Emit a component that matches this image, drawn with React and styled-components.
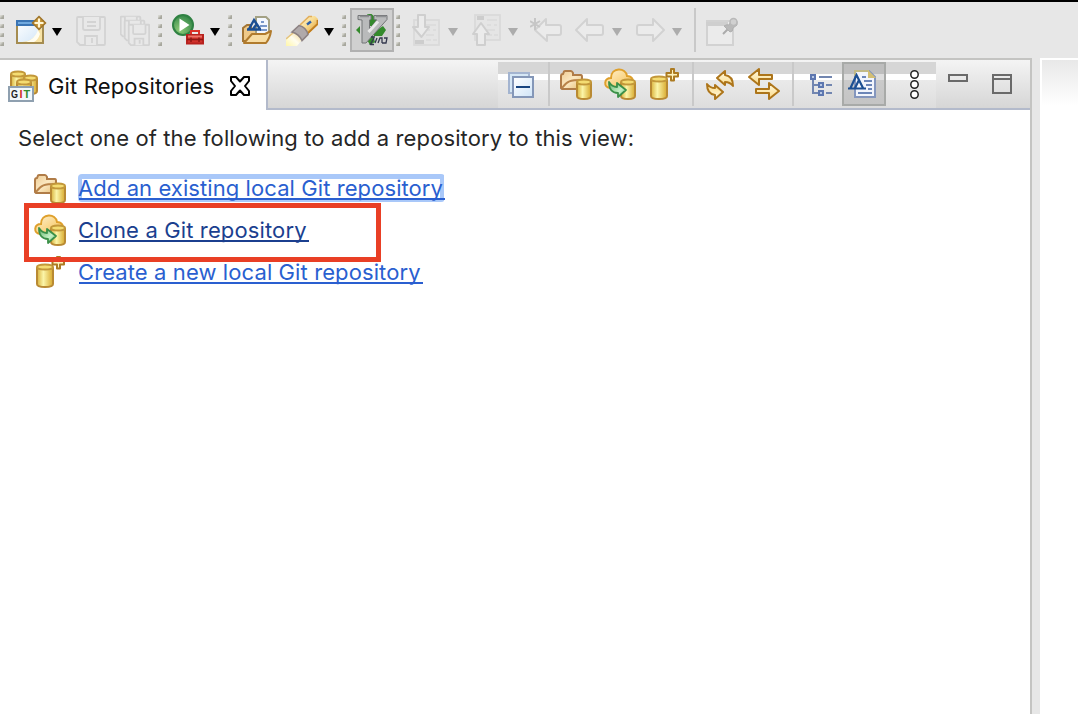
import React from "react";
import styled, { createGlobalStyle } from "styled-components";

const GlobalStyle = createGlobalStyle`
  * { box-sizing: border-box; }
  html, body { margin: 0; padding: 0; }
  body { background: #e7e7e7; font-family: Inter, "Liberation Sans", sans-serif; font-size: 22px; overflow: hidden; }
`;

const Window = styled.div`
  display: flex;
  flex-direction: column;
  width: 1078px;
  height: 714px;
  border-top: 2px solid #000;
  background: #e7e7e7;
`;
const MainToolbar = styled.div`
  display: flex;
  align-items: center;
  height: 56px;
  flex: none;
`;
const Svg = styled.svg`
  display: block;
  flex: none;
  margin-left: ${(p) => p.$gap || 0}px;
`;
const Handle = styled.div`
  display: flex;
  flex-direction: column;
  gap: 5px;
  flex: none;
  margin-left: ${(p) => p.$gap || 0}px;
`;
const Grip = styled.i`
  width: 4px;
  height: 4px;
  background: linear-gradient(135deg, #d8d8d2 20%, #a9a99f 60%, #a5a59c);
`;
const Caret = styled.span`
  flex: none;
  width: 0;
  height: 0;
  margin: 4px 0 0 ${(p) => p.$gap}px;
  border: 5px solid transparent;
  border-top: 8px solid ${(p) => (p.$off ? "#acacac" : "#000")};
  border-bottom: 0;
`;
const Toggle = styled.button`
  display: flex;
  align-items: center;
  justify-content: center;
  flex: none;
  width: 44px;
  height: 44px;
  padding: 0;
  margin-left: ${(p) => p.$gap}px;
  border: 2px solid ${(p) => p.$edge || "#b1b1b1"};
  background: ${(p) => p.$fill || "#d0d0d0"};
`;
const Divider = styled.div`
  flex: none;
  width: 2px;
  height: 44px;
  margin-left: ${(p) => p.$gap}px;
  background: #c9c9c9;
`;
const Workbench = styled.div`
  display: flex;
  flex: 1;
  gap: 8px;
`;
const View = styled.section`
  display: flex;
  flex-direction: column;
  width: 1032px;
  border: solid #c4c4c2;
  border-width: 2px 2px 0 0;
  background: #fff;
`;
const EditorArea = styled.div`
  flex: 1;
  border: solid #fff;
  border-width: 2px 0 0 2px;
  background: linear-gradient(#e8e8e8, #fff 46px);
`;
const TabStrip = styled.header`
  display: flex;
  height: 50px;
  flex: none;
  border-bottom: 2px solid #b3bacb;
  background: linear-gradient(#f4f4f4, #d6d6d6);
`;
const Tab = styled.div`
  display: flex;
  align-items: center;
  width: 268px;
  height: 50px;
  flex: none;
  padding: 2px 0 0 8px;
  border-right: 2px solid #b3bacb;
  background: #fff;
`;
const TabTitle = styled.span`
  width: 182px;
  margin-left: 10px;
  color: #111;
  white-space: nowrap;
  line-height: 28px;
  letter-spacing: 0.15px;
`;
const ViewToolbar = styled.div`
  display: flex;
  align-items: center;
  width: 438px;
  height: 46px;
  margin: 2px 0 0 230px;
  padding-bottom: 2px;
  background: linear-gradient(#d6d6d6 12px, #fff 12px, #fff 18px, #eaeaea 18px, #dddddd);
`;
const ViewControls = styled.div`
  display: flex;
  margin: 14px 0 0 12px;
  gap: 24px;
`;
const MinimizeButton = styled.div`
  width: 20px;
  height: 8px;
  border: 2px solid #6a6a6a;
`;
const MaximizeButton = styled.div`
  width: 20px;
  height: 20px;
  border: 2px solid #6a6a6a;
  background: linear-gradient(transparent 2px, #6a6a6a 2px, #6a6a6a 4px, transparent 4px);
`;
const Content = styled.main`
  display: flex;
  flex-direction: column;
  align-items: flex-start;
`;
const Prompt = styled.p`
  margin: 14px 0 15px 18px;
  line-height: 28px;
  white-space: nowrap;
  color: #262626;
  letter-spacing: 0.11px;
`;
const Option = styled.div`
  position: relative;
  display: flex;
  align-items: center;
  height: 42px;
  margin-left: 34px;
  gap: 12px;
`;
const OptionLink = styled.a`
  position: relative;
  height: 28px;
  width: ${(p) => p.$w}px;
  line-height: 28px;
  white-space: nowrap;
  color: ${(p) => (p.$active ? "#1b3f8f" : "#2a5fd0")};
  letter-spacing: ${(p) => p.$track}px;
  border-radius: 4px;
  background: ${(p) =>
    p.$focused
      ? "linear-gradient(#fff, #fff) 4px 5px / 358px 19px no-repeat, linear-gradient(90deg, #a9c8f9 366px, transparent 366px)"
      : "none"};
  &::after {
    content: "";
    position: absolute;
    left: 1px;
    right: 0;
    bottom: 2px;
    height: 2px;
    background: currentColor;
  }
`;
const Highlight = styled.div`
  position: absolute;
  z-index: 2;
  left: -10px;
  top: -6px;
  width: 357px;
  height: 59px;
  border: 5px solid #e93f25;
`;

function Icon({ box, gap, children }) {
  const [x, y, w, h] = box;
  return (
    <Svg width={w} height={h} viewBox={`${x} ${y} ${w} ${h}`} $gap={gap} fill="none">
      {children}
    </Svg>
  );
}

const Gradients = () => (
  <svg width="0" height="0" display="block">
    <defs>
      <linearGradient id="gold" x1="0" x2="1" y1="0" y2="0">
        <stop offset="0" stopColor="#d9b23c" />
        <stop offset=".4" stopColor="#fbf5a8" />
        <stop offset="1" stopColor="#d8a92e" />
      </linearGradient>
      <linearGradient id="tan" x1="0" x2="1" y1="0" y2="1">
        <stop offset="0" stopColor="#eecb93" />
        <stop offset=".5" stopColor="#fbe8c2" />
        <stop offset="1" stopColor="#e6bd74" />
      </linearGradient>
      <linearGradient id="arrow" x1="0" x2="0" y1="0" y2="1">
        <stop offset="0" stopColor="#fffbe6" />
        <stop offset="1" stopColor="#fbd983" />
      </linearGradient>
      <linearGradient id="cloud" x1="0" x2="1" y1="0" y2="1">
        <stop offset="0" stopColor="#fff3d2" />
        <stop offset="1" stopColor="#f5bd4c" />
      </linearGradient>
      <linearGradient id="leaf" x1="0" x2="1" y1="0" y2="1">
        <stop offset="0" stopColor="#63b26c" />
        <stop offset=".6" stopColor="#c6f0c6" />
        <stop offset="1" stopColor="#70c67c" />
      </linearGradient>
      <linearGradient id="sheet" x1="0" x2="1" y1="0" y2="1">
        <stop offset="0" stopColor="#ffffff" />
        <stop offset="1" stopColor="#cfe4f7" />
      </linearGradient>
      <radialGradient id="run" cx=".35" cy=".75" r=".75">
        <stop offset="0" stopColor="#8fcb78" />
        <stop offset="1" stopColor="#37894a" />
      </radialGradient>
      <linearGradient id="torch" x1="0" x2="1" y1="0" y2="1">
        <stop offset="0" stopColor="#fff3cf" />
        <stop offset=".45" stopColor="#f8dc94" />
        <stop offset="1" stopColor="#dd9420" />
      </linearGradient>
      <linearGradient id="beam" x1="0" x2="1" y1="1" y2="0">
        <stop offset="0" stopColor="#fff6a8" />
        <stop offset=".5" stopColor="#fffdf0" />
        <stop offset="1" stopColor="#f3d68c" />
      </linearGradient>
    </defs>
  </svg>
);

const Cylinder = ({ x, y, w, h }) => {
  const r = w / 2;
  return (
    <g stroke="#b98a33" strokeWidth="2">
      <path d={`M${x} ${y + 3}V${y + h - 3}C${x} ${y + h + 1} ${x + w} ${y + h + 1} ${x + w} ${y + h - 3}V${y + 3}`} fill="url(#gold)" />
      <ellipse cx={x + r} cy={y + 3} rx={r} ry="2.600" fill="#f4dc72" stroke="#c3983a" />
    </g>
  );
};
const AddRepoIcon = ({ gap }) => (
  <Icon box={[0, 0, 32, 32]} gap={gap}>
    <path d="M1 20V8Q1 6 3 6L4 3.500Q4 3 5 3H11Q12 3 13 5V7H21Q22 7 22 9V21H2Z" fill="url(#tan)" stroke="#b07c48" strokeWidth="2" />
    <path d="M2 20C7 13 10 12 22 12" stroke="#b98349" strokeWidth="2" />
    <Cylinder x={17} y={11} w={14} h={20} />
  </Icon>
);
const CloneRepoIcon = ({ gap }) => (
  <Icon box={[0, 0, 32, 32]} gap={gap}>
    <path d="M6 20C-1 19 0 10 7 10C7 -1 22 -1 23 8C28 8 30 12 29 16L20 20Z" fill="url(#cloud)" stroke="#dfa02c" strokeWidth="2" />
    <Cylinder x={17} y={11} w={14} h={20} />
    <path d="M5 14Q8 19 13 19V15L22 22L14 29V25Q5 25 5 14Z" fill="url(#leaf)" stroke="#3b9048" strokeWidth="1.800" strokeLinejoin="round" />
  </Icon>
);
const CreateRepoIcon = ({ gap }) => (
  <Icon box={[0, 0, 32, 32]} gap={gap}>
    <Cylinder x={3} y={8} w={16} h={23} />
    <path d="M23 1H26V5H30V8.500H26V12.500H23V8.500H18.500V5H23Z" fill="#fdf2bd" stroke="#ac7b22" strokeWidth="2" strokeLinejoin="round" />
  </Icon>
);
const Floppy = ({ x, y, s = 1 }) => (
  <g transform={`translate(${x} ${y}) scale(${s})`} stroke="#d3d3d3" strokeWidth={1.8 / s} fill="#e8e8e8">
    <path d="M2 1H28Q29 1 29 2V28Q29 29 28 29H4L1 26V2Q1 1 2 1Z" />
    <path d="M7 1V12Q7 14 9 14H22Q24 14 24 12V1M9 29V20H21V29M16 22V27" />
    {s === 1 && <path d="M11 6H20M11 10H20" />}
  </g>
);
const AnnotationPage = ({ x, y }) => (
  <g>
    <rect x={x} y={y} width="25" height="25" fill="#e5e5e5" stroke="#dadada" strokeWidth="1.800" />
    <path d={`M${x + 12} ${y + 5}h10M${x + 12} ${y + 10}h4m3 0h3M${x + 12} ${y + 15}h8M${x + 12} ${y + 20}h5m2 0h4`} stroke="#dadada" strokeWidth="1.600" />
  </g>
);
const DragHandle = ({ gap }) => (
  <Handle $gap={gap}>
    <Grip /><Grip /><Grip /><Grip />
  </Handle>
);

function Toolbar() {
  return (
    <MainToolbar>
      <DragHandle />
      <Icon box={[16, 14, 32, 32]} gap={12}>
        <rect x="17" y="21" width="26" height="22" fill="url(#sheet)" stroke="#a58c50" strokeWidth="2" />
        <path d="M22 42Q36 41 39 28L42 29V42Z" fill="#f8e3a5" />
        <path d="M26 42Q35 39 38 30L40 34Q38 40 34 42Z" fill="#fffdf0" />
        <path d="M16 20H37V26H16Z" fill="#3a74b4" />
        <path d="M18 23H36" stroke="#70a9df" strokeWidth="2" />
        <path d="M39 16.500L45.500 23L39 29.500L32.500 23Z" fill="#c39234" stroke="#a0752a" strokeWidth="1.500" />
        <path d="M39 18.500V27.500M34.500 23H43.500" stroke="#fff6d5" strokeWidth="2.200" />
      </Icon>
      <Caret $gap={4} />
      <Icon box={[76, 14, 30, 32]} gap={14}><Floppy x={76} y={16} /></Icon>
      <Icon box={[120, 14, 30, 32]} gap={14}>
        <Floppy x={120} y={16} s={0.7} />
        <Floppy x={124} y={20} s={0.7} />
        <Floppy x={128} y={24} s={0.73} />
      </Icon>
      <DragHandle gap={8} />
      <Icon box={[172, 14, 32, 32]} gap={10}>
        <circle cx="183" cy="25" r="10" fill="url(#run)" stroke="#2f8142" strokeWidth="2" />
        <path d="M179.500 18.500L189.500 25L179.500 31.500Z" fill="#fff" />
        <path d="M191 35V31H199V35" stroke="#d93027" strokeWidth="2" />
        <rect x="187" y="35" width="16" height="8.500" fill="#d2322c" stroke="#b7221e" strokeWidth="2" />
        <path d="M188 36.500H202" stroke="#ed7166" strokeWidth="2" />
        <path d="M187 39.500H203M191 37.500V42M199 37.500V42" stroke="#8e1713" strokeWidth="1.500" />
      </Icon>
      <Caret $gap={6} />
      <DragHandle gap={8} />
      <Icon box={[242, 14, 32, 32]} gap={10}>
        <path d="M243 41V28L247 25H251V29H263V41Z" fill="#efc988" stroke="#a47635" strokeWidth="2" />
        <path d="M258 17H266L269 20V34H256V17Z" fill="#f4f8ff" stroke="#a3a184" strokeWidth="2" />
        <path d="M261 22H264M260 26H267M260 30H267" stroke="#7a98ca" strokeWidth="2" />
        <path d="M247 29.500H261M249 29L254 20L260 29M253 29L256 25" stroke="#1c4f93" strokeWidth="2.400" />
        <path d="M244 43L252 34H265L271 31Q270 38 266 43Z" fill="#f8dda4" stroke="#b17b2d" strokeWidth="2" strokeLinejoin="round" />
      </Icon>
      <Icon box={[286, 14, 32, 32]} gap={12}>
        <path d="M286 39L294 32Q300 34 301 41L297 46H286Z" fill="url(#beam)" />
        <path d="M286 39L293 33" stroke="#e5c37e" strokeWidth="1.600" />
        <path d="M300 24L309 16H315L318 19V25L308 34Z" fill="url(#torch)" />
        <path d="M300 25L309 16.500H312" stroke="#e1ae5c" strokeWidth="1.600" />
        <path d="M317.500 20V24L307 34" stroke="#c17e20" strokeWidth="1.800" />
        <path d="M307 24.500L311 21.500" stroke="#2f61a8" strokeWidth="2.400" />
        <path d="M292 32L299 25.500Q306 27 308 34.500L302 40.500Q299 34 292 32Z" fill="#b0a9aa" stroke="#8c8182" strokeWidth="1.600" />
      </Icon>
      <Caret $gap={6} />
      <DragHandle gap={8} />
      <Toggle $gap={4} aria-label="Vrapper">
        <Icon box={[356, 14, 32, 32]}>
          <path d="M367 14.500L371 13.500L377 19L373 26H368ZM356 30L360 26V34ZM374 32L383 26L386 30L382 36H374ZM366 38L373 35L375 42L370 45Z" fill="#348a2c" />
          <path d="M358 15.500H371V19.500L369.500 20V29L377 20L374 19.500V15.500H387V19.500L366 43H362V20L358 19.500Z" fill="#b9babb" stroke="#747678" strokeWidth="1" />
          <path d="M360 16.500H369M376 16.500H386" stroke="#8e9092" strokeWidth="1.500" />
          <path d="M368.500 32L378 21.500" stroke="#e9e9e9" strokeWidth="3" />
          <path d="M374 38L370 45M371 37H375M377 38L375 43M378 43L380 38H382V43M384 38H387L386 43H382M370 44.500H374" stroke="#34384e" strokeWidth="1.300" />
        </Icon>
      </Toggle>
      <DragHandle gap={2} />
      <Icon box={[412, 14, 30, 32]} gap={12}>
        <AnnotationPage x={414} y={20} />
        <path d="M415 40H424V44H415Z" fill="#cdcdcd" />
        <path d="M418 15H425V27H429L421.500 37L413 27H418Z" fill="#ebebeb" stroke="#cfcfcf" strokeWidth="2" strokeLinejoin="round" />
      </Icon>
      <Caret $off $gap={6} />
      <Icon box={[472, 14, 30, 32]} gap={14}>
        <AnnotationPage x={475} y={15} />
        <path d="M477 16H484V20H477Z" fill="#cdcdcd" />
        <path d="M477 45V34H473L481 23L489 34H485V45Z" fill="#ebebeb" stroke="#cfcfcf" strokeWidth="2" strokeLinejoin="round" />
      </Icon>
      <Caret $off $gap={6} />
      <Icon box={[530, 14, 32, 32]} gap={12}>
        <path d="M535 30L546 19V25H559Q561 25 561 27V33Q561 35 559 35H547V41Z" fill="#ebebeb" stroke="#d2d2d2" strokeWidth="2" strokeLinejoin="round" />
        <path d="M535 18V30M530 21L540 27M530 27L540 21" stroke="#c6c6c6" strokeWidth="2" />
      </Icon>
      <Icon box={[574, 14, 32, 32]} gap={12}>
        <path d="M576 30L587 19V25H601Q603 25 603 27V33Q603 35 601 35H587V41Z" fill="#ebebeb" stroke="#d2d2d2" strokeWidth="2" strokeLinejoin="round" />
      </Icon>
      <Caret $off $gap={6} />
      <Icon box={[634, 14, 32, 32]} gap={12}>
        <path d="M664 30L653 19V25H639Q637 25 637 27V33Q637 35 639 35H653V41Z" fill="#ebebeb" stroke="#d2d2d2" strokeWidth="2" strokeLinejoin="round" />
      </Icon>
      <Caret $off $gap={6} />
      <Divider $gap={12} />
      <Icon box={[706, 14, 32, 32]} gap={10}>
        <path d="M707 21H733V45H707Z" fill="#ebebeb" stroke="#d2d2d2" strokeWidth="2" />
        <path d="M706 22H728V26H706Z" fill="#cfcfcf" />
        <path d="M723 34L728 29" stroke="#ababab" strokeWidth="2" />
        <path d="M724 26Q727 24 729 25L732 19Q738 18 737 25L733 28Q733 32 730 32Z" fill="#b9b9b9" stroke="#b0b0b0" strokeWidth="1" />
        <circle cx="733.500" cy="22" r="3.500" fill="#d0d0d0" stroke="#b9b9b9" strokeWidth="1.500" />
      </Icon>
    </MainToolbar>
  );
}

function GitTab() {
  return (
    <Tab>
      <Icon box={[8, 69, 30, 34]}>
        <Cylinder x={11} y={71} w={14} h={18} />
        <Cylinder x={24} y={75} w={13} h={19} />
        <Cylinder x={17} y={79} w={14} h={18} />
        <rect x="9" y="87" width="24" height="14" fill="#f2f8fb" stroke="#8fa0b0" strokeWidth="2" />
        <text x="11" y="98" fontFamily="Liberation Sans" fontWeight="700" fontSize="11" textLength="7" lengthAdjust="spacingAndGlyphs" fill="#222">G</text>
        <text x="19.500" y="98" fontFamily="Liberation Sans" fontWeight="700" fontSize="11" fill="#d22d26">I</text>
        <text x="23.500" y="98" fontFamily="Liberation Sans" fontWeight="700" fontSize="11" fill="#338a30">T</text>
      </Icon>
      <TabTitle>Git Repositories</TabTitle>
      <Icon box={[230, 76, 20, 20]}>
        <path d="M231 77H236L240 81.500L244 77H249V81L245 86L249 91V95H244L240 90.500L236 95H231V91L235 86L231 81Z" stroke="#000" strokeWidth="2" strokeLinejoin="round" />
      </Icon>
    </Tab>
  );
}

const SYNC_ARROW = "M717 78L725 71V75Q733 76 733 86Q730 82 725 82V85Z";

function RepositoryActions() {
  return (
    <ViewToolbar>
      <Icon box={[508, 68, 28, 32]} gap={10}>
        <rect x="509" y="73" width="20" height="20" fill="#d5e7f5" stroke="#a3b4d0" strokeWidth="2" />
        <rect x="513" y="77" width="20" height="20" fill="url(#sheet)" stroke="#8497b8" strokeWidth="2" />
        <path d="M516 87H530" stroke="#17447f" strokeWidth="2" />
      </Icon>
      <Divider $gap={12} />
      <AddRepoIcon gap={10} />
      <CloneRepoIcon gap={12} />
      <CreateRepoIcon gap={12} />
      <Divider $gap={12} />
      <Icon box={[704, 68, 32, 32]} gap={10}>
        <g fill="url(#arrow)" stroke="#ad751a" strokeWidth="2" strokeLinejoin="round">
          <path d={SYNC_ARROW} />
          <path d={SYNC_ARROW} transform="rotate(180 720 85)" />
        </g>
      </Icon>
      <Icon box={[748, 68, 32, 32]} gap={12}>
        <g fill="url(#arrow)" stroke="#ad751a" strokeWidth="2" strokeLinejoin="round">
          <path d="M749 77L759 69V75H772V79H759V85Z" />
          <path d="M779 91L769 99V93H756V89H769V83Z" />
        </g>
      </Icon>
      <Divider $gap={12} />
      <Icon box={[808, 68, 28, 32]} gap={14}>
        <path d="M813 78V93H818M813 85H818M819 77H832M826 85H832M826 93H832" stroke="#7286b0" strokeWidth="2" />
        <g fill="#b9c9e4" stroke="#5d77b0" strokeWidth="2">
          <rect x="811" y="75" width="4" height="4" />
          <rect x="819" y="83" width="4" height="4" />
          <rect x="819" y="91" width="4" height="4" />
        </g>
      </Icon>
      <Toggle $gap={6} $edge="#a8aaa8" $fill="linear-gradient(#bebebe 10px, #dedede 10px, #dedede 16px, #cacaca 16px, #c4c4c4)" aria-label="Link with Editor">
        <Icon box={[848, 68, 32, 32]}>
          <path d="M855 71H869L875 77V97H855Z" fill="#f2f5fc" stroke="#8496bd" strokeWidth="2" />
          <path d="M855 76V71H869" stroke="#c2ba87" strokeWidth="2" />
          <path d="M868 70L876 78H868Z" fill="#d4bf73" />
          <path d="M862 77H866M864 81H872M866 85H872M868 89H872M858 93H872" stroke="#6c86b8" strokeWidth="2" />
          <path d="M848 88.500H866M850.500 88L856.500 75L863 88M855 88L859 80" stroke="#1c4f93" strokeWidth="2.200" />
        </Icon>
      </Toggle>
      <Icon box={[908, 68, 14, 32]} gap={22}>
        {[74.5, 84.5, 94.5].map((cy) => (
          <circle key={cy} cx="914.5" cy={cy} r="3.700" fill="#fff" stroke="#222" strokeWidth="1.500" />
        ))}
      </Icon>
    </ViewToolbar>
  );
}

export default function App() {
  return (
    <Window>
      <GlobalStyle />
      <Gradients />
      <Toolbar />
      <Workbench>
        <View>
          <TabStrip>
            <GitTab />
            <RepositoryActions />
            <ViewControls>
              <MinimizeButton />
              <MaximizeButton />
            </ViewControls>
          </TabStrip>
          <Content>
            <Prompt>Select one of the following to add a repository to this view:</Prompt>
            <Option>
              <AddRepoIcon />
              <OptionLink $w={367} $track={0.08} $focused>Add an existing local Git repository</OptionLink>
            </Option>
            <Option>
              <CloneRepoIcon />
              <OptionLink $w={231} $track={0.13} $active>Clone a Git repository</OptionLink>
              <Highlight />
            </Option>
            <Option>
              <CreateRepoIcon />
              <OptionLink $w={345} $track={0.1}>Create a new local Git repository</OptionLink>
            </Option>
          </Content>
        </View>
        <EditorArea />
      </Workbench>
    </Window>
  );
}
